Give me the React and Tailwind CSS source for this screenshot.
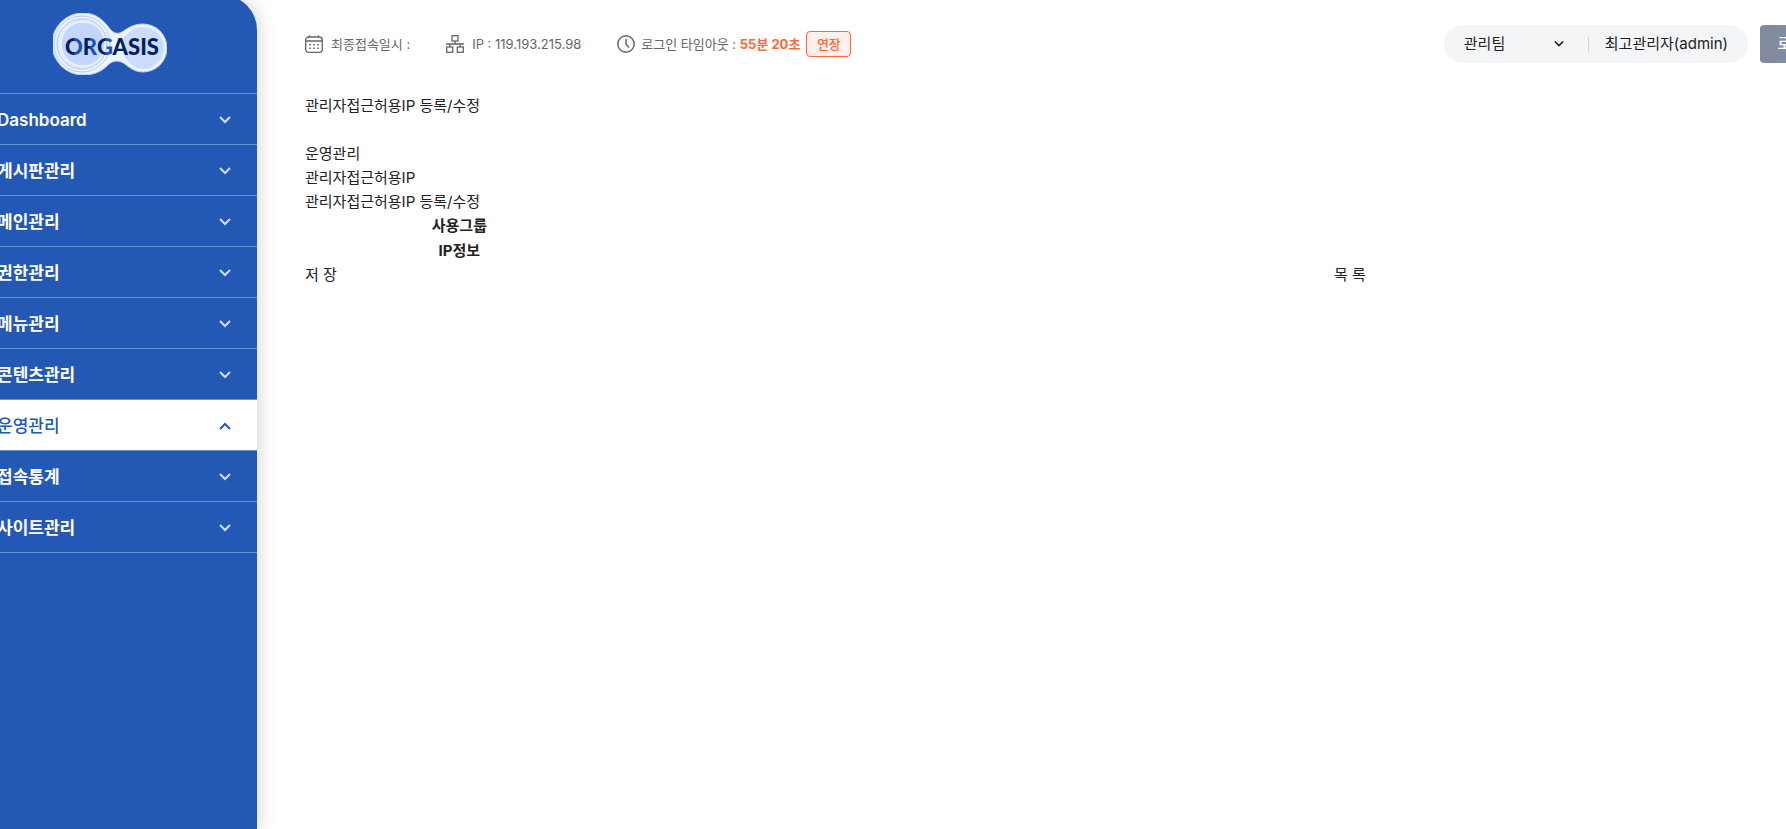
import React, { useState } from 'react';

const menus = [
  'Dashboard',
  '게시판관리',
  '메인관리',
  '권한관리',
  '메뉴관리',
  '콘텐츠관리',
  '운영관리',
  '접속통계',
  '사이트관리'
];

const Chevron = ({ up, className }) => (
  <svg viewBox="0 0 12 8" className={className} fill="none" stroke="currentColor" strokeWidth="2" aria-hidden="true">
    <path d={up ? 'M1 7 6 2l5 5' : 'M1 1l5 5 5-5'} />
  </svg>
);

const Logo = () => (
  <svg viewBox="0 0 114 62" className="w-[114px] h-[62px]" role="img" aria-label="ORGASIS">
    <defs>
      {/* dark left half, lighter right half on the first three letters */}
      <linearGradient id="letters" gradientUnits="userSpaceOnUse" x1="13" y1="0" x2="107" y2="0">
        <stop offset="0.09" stopColor="#00205f" />
        <stop offset="0.09" stopColor="#1e50b4" />
        <stop offset="0.18" stopColor="#1e50b4" />
        <stop offset="0.18" stopColor="#00205f" />
        <stop offset="0.25" stopColor="#00205f" />
        <stop offset="0.25" stopColor="#1e50b4" />
        <stop offset="0.33" stopColor="#1e50b4" />
        <stop offset="0.33" stopColor="#00205f" />
        <stop offset="0.42" stopColor="#00205f" />
        <stop offset="0.42" stopColor="#1e50b4" />
        <stop offset="0.49" stopColor="#1e50b4" />
        <stop offset="0.49" stopColor="#00205f" />
      </linearGradient>
    </defs>
    <path
      d="M30 0C44 0 51 8 57 16C62 22 67 21 72 17C78 13 83 11 90 11A24 24 0 0 1 90 59C82 59 77 55 72 51C66 47 60 47 55 52C49 58 42 62 30 62A31 31 0 0 1 30 0Z"
      fill="#eef4ff"
      stroke="#b4cdf8"
      strokeWidth="1"
    />
    <path d="M90 14C80 14 75 20 71 24Q66 34 73 46C78 52 83 56 90 56A21 21 0 0 0 90 14Z" fill="#ccdcff" />
    <circle cx="29" cy="31" r="28" fill="none" stroke="#b3ccfb" />
    <circle cx="29" cy="31" r="25" fill="#e2ecff" stroke="#adc6f8" />
    <circle cx="30" cy="31" r="22" fill="#c3d6ff" stroke="#f6f9ff" />
    <text x="12" y="42" fill="url(#letters)" className="font-['Lato'] font-black text-[22px]">ORGASIS</text>
  </svg>
);

const CalendarIcon = () => (
  <svg viewBox="0 0 18 18" className="w-[18px] h-[18px]" fill="none" stroke="currentColor" strokeWidth="1.3" aria-hidden="true">
    <rect x="0.7" y="2" width="16.6" height="15.3" rx="3" />
    <path d="M1 6h16M4.5 0.3v2M13.5 0.3v2" />
    <path d="M4.2 9.8h1.6M8.2 9.8h1.6M12.2 9.8h1.6M4.2 13.2h1.6M8.2 13.2h1.6M12.2 13.2h1.6" strokeWidth="1.5" />
  </svg>
);

const NetworkIcon = () => (
  <svg viewBox="0 0 18 18" className="w-[18px] h-[18px]" fill="none" stroke="currentColor" strokeWidth="1.3" aria-hidden="true">
    <rect x="6" y="0.7" width="6" height="5.3" />
    <rect x="0.7" y="12" width="6" height="5.3" />
    <rect x="11.3" y="12" width="6" height="5.3" />
    <path d="M9 6v3M0 9h18M3.7 9v3M14.3 9v3" />
  </svg>
);

const ClockIcon = () => (
  <svg viewBox="0 0 18 18" className="w-[18px] h-[18px]" fill="none" stroke="currentColor" strokeWidth="1.5" aria-hidden="true">
    <circle cx="9" cy="9" r="8.2" />
    <path d="M9 4v5l3 3.6" />
  </svg>
);

const Sidebar = () => {
  const [active, setActive] = useState('운영관리');

  return (
    <aside className="w-[294px] -ml-[37px] -mt-[5px] shrink-0 rounded-tr-[35px] bg-[#2458b5] shadow-[0_0_20px_rgba(0,0,0,0.2)]">
      <h1 className="h-[99px] pt-[18px] flex justify-center border-b border-[#6c92d6]">
        <Logo />
      </h1>
      <nav>
        {menus.map(menu => (
          <button
            key={menu}
            onClick={() => setActive(menu)}
            className={`flex w-full h-[51px] items-center justify-between border-b border-[#6c92d6] pt-[2px] pl-[34px] pr-[26px] text-[17px] ${
              menu === active ? 'bg-white text-[#2458b5] font-medium' : 'text-white font-semibold'
            }`}
          >
            {menu}
            <Chevron up={menu === active} className={menu === active ? 'w-3 h-2' : 'w-3 h-2 text-[#d3def0]'} />
          </button>
        ))}
      </nav>
    </aside>
  );
};

const Header = () => (
  <header className="flex h-[38px] items-center justify-between -mr-[75px]">
    <ul className="flex items-center gap-9 text-[13px] text-[#666]">
      <li className="flex items-center gap-2">
        <CalendarIcon />
        최종접속일시 :
      </li>
      <li className="flex items-center gap-2">
        <NetworkIcon />
        IP : 119.193.215.98
      </li>
      <li className="flex items-center gap-1.5">
        <ClockIcon />
        <span>
          로그인 타임아웃 : <strong className="font-bold text-[#ff6737]">55분 20초</strong>
        </span>
        <button className="h-[26px] w-[45px] rounded border border-[#ff6737] bg-[#fff0eb] font-medium text-[#ff6737]">연장</button>
      </li>
    </ul>
    <div className="flex items-center gap-3">
      <div className="flex h-[38px] items-center rounded-full bg-[#f3f5f7] px-5">
        <label htmlFor="team" className="sr-only">부서</label>
        <div className="relative flex items-center">
          <select id="team" className="w-[124px] appearance-none bg-transparent outline-none">
            <option>관리팀</option>
          </select>
          <Chevron className="pointer-events-none absolute right-6 w-[10px] h-2" />
        </div>
        <span className="h-[15px] w-px bg-[#cfd2d8] mr-4" />
        최고관리자(admin)
      </div>
      <button className="h-[38px] w-[90px] rounded bg-[#828aa0] font-medium text-white">로그아웃</button>
    </div>
  </header>
);

export default function App() {
  return (
    <div className="flex min-h-screen overflow-hidden bg-white font-['Inter','Noto_Sans_CJK_KR',sans-serif] text-[15px] leading-6 text-[#222]">
      <Sidebar />
      <div className="min-w-0 flex-1 pl-12 pr-[11px] pt-[25px]">
        <Header />
        <main className="pt-[31px]">
          <h2 className="mb-6">관리자접근허용IP 등록/수정</h2>
          <ul>
            <li>운영관리</li>
            <li>관리자접근허용IP</li>
            <li>관리자접근허용IP 등록/수정</li>
          </ul>
          <table className="w-full table-fixed">
            <colgroup>
              <col className="w-[21%]" />
              <col />
            </colgroup>
            <tbody>
              <tr className="h-6">
                <th scope="row" className="font-bold">사용그룹</th>
                <td />
              </tr>
              <tr className="h-[25px]">
                <th scope="row" className="font-bold">IP정보</th>
                <td />
              </tr>
            </tbody>
          </table>
          <div className="grid grid-cols-[7fr_3fr] justify-items-start">
            <button>저 장</button>
            <button>목 록</button>
          </div>
        </main>
      </div>
    </div>
  );
}
